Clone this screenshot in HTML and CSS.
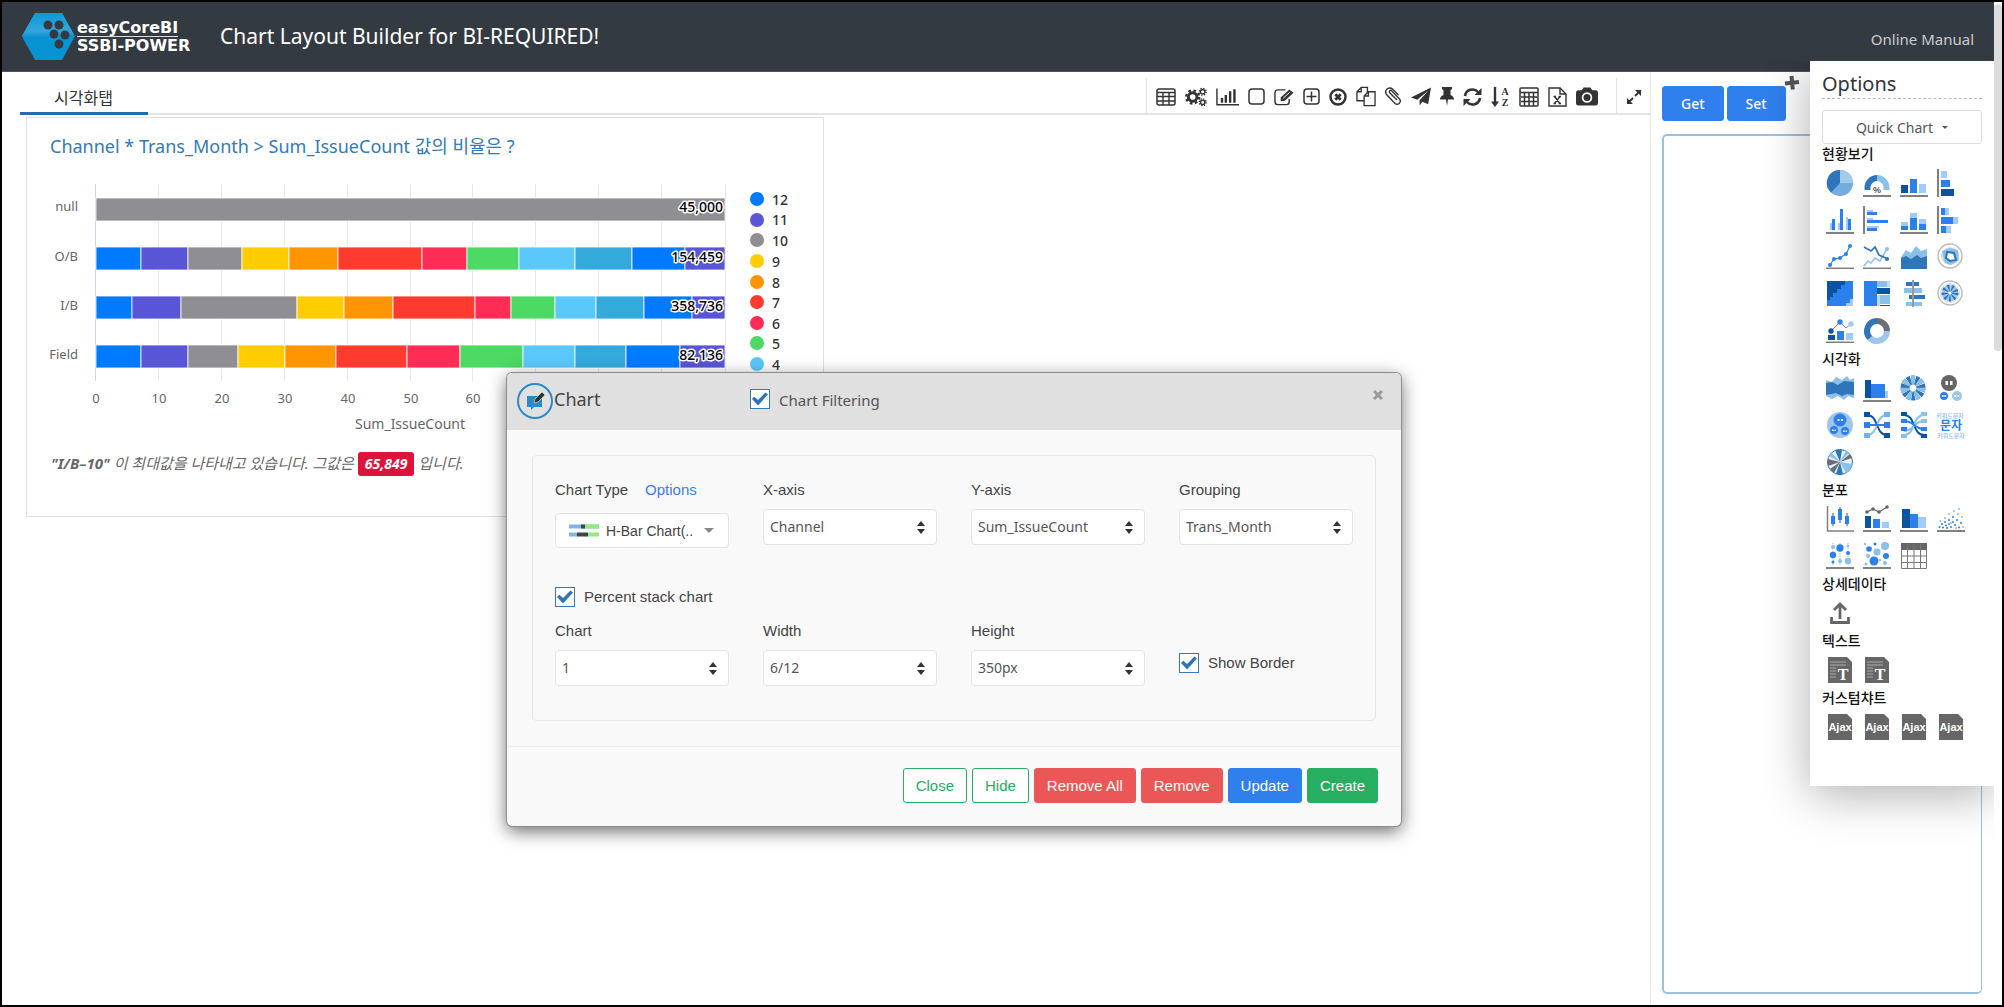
FILE: index.html
```html
<!DOCTYPE html>
<html lang="ko">
<head>
<meta charset="utf-8">
<title>Chart Layout Builder</title>
<link rel="stylesheet" href="styles.css">
</head>
<body>
<div class="page">
  <header class="topbar">
    <div class="brand">
      <svg class="brand-mark" viewBox="0 0 53 47" width="53" height="47" aria-hidden="true">
        <defs><linearGradient id="hex" x1="0" y1="0" x2="0" y2="1"><stop offset="0" stop-color="#0a9ad9"/><stop offset=".55" stop-color="#35a5dc"/><stop offset=".75" stop-color="#0790cf"/><stop offset="1" stop-color="#0a93d2"/></linearGradient></defs>
        <path d="M13 0H40L53 23L40 47H13L0 23Z" fill="#0894d3"/>
        <path d="M0 23L13 0H40L52 22Q24 20 5 33Z" fill="url(#hex)"/>
        <g fill="#343a42"><circle cx="26" cy="12" r="4.500"/><circle cx="37" cy="12" r="4.500"/><circle cx="32" cy="21" r="4.500"/><circle cx="43" cy="22" r="4.500"/><circle cx="37" cy="31" r="4.500"/></g>
      </svg>
      <div class="brand-name"><span class="brand-top">easyCoreBI</span><span class="brand-bottom">SSBI-POWER</span></div>
    </div>
    <h1>Chart Layout Builder for BI-REQUIRED!</h1>
    <a class="manual" href="#">Online Manual</a>
  </header>

  <div class="columns">
    <main class="work">
      <div class="tabs">
        <a class="tab" href="#">시각화탭</a>
        <div class="tools">
          <button class="tool" aria-label="Table"><svg viewBox="0 0 20 18" width="20" height="18"><rect x="1" y="1" width="18" height="16" rx="2" fill="none" stroke="currentColor" stroke-width="1.500"/><path d="M1 4.500H19M1 8.500H19M1 13H19M7 4V17M13 4V17" stroke="currentColor" stroke-width="1.400"/></svg></button>
          <button class="tool" aria-label="Settings"><svg viewBox="0 0 23 20" width="22" height="20" fill="none" stroke="currentColor"><circle cx="8" cy="10" r="4.500" stroke-width="3"/><circle cx="8" cy="10" r="6.800" stroke-width="2.400" stroke-dasharray="2.700 2.640"/><circle cx="18.500" cy="4.500" r="2.300" stroke-width="1.400"/><circle cx="18.500" cy="4.500" r="3.600" stroke-width="1.400" stroke-dasharray="1.400 1.430"/><circle cx="18.500" cy="15.500" r="2.300" stroke-width="1.400"/><circle cx="18.500" cy="15.500" r="3.600" stroke-width="1.400" stroke-dasharray="1.400 1.430"/></svg></button>
          <button class="tool" aria-label="Bar chart"><svg viewBox="0 0 24 18" width="23" height="18"><path d="M1 0V17H24" fill="none" stroke="currentColor" stroke-width="1.500"/><path d="M5 10h2.500v5H5zM9 7h2.500v8H9zM13.500 3H16v12h-2.500zM18 1h2.500v14H18z" fill="currentColor"/></svg></button>
          <button class="tool" aria-label="Box"><svg viewBox="0 0 17 17" width="17" height="17"><rect x="1" y="1" width="15" height="15" rx="3" fill="none" stroke="currentColor" stroke-width="1.500"/></svg></button>
          <button class="tool" aria-label="Edit"><svg viewBox="0 0 21 18" width="20" height="18"><path d="M12 1.500H4a3 3 0 0 0-3 3V14a3 3 0 0 0 3 3h9a3 3 0 0 0 3-3v-3" fill="none" stroke="currentColor" stroke-width="1.500"/><path d="M7 9.500L16 1l4.500 3.500L11.500 13L7 13.500Z" fill="currentColor"/><path d="M9.500 10.500L16.500 4" stroke="#fff"/></svg></button>
          <button class="tool" aria-label="Add"><svg viewBox="0 0 17 17" width="17" height="17" fill="none" stroke="currentColor" stroke-width="1.500"><rect x="1" y="1" width="15" height="15" rx="3"/><path d="M3.500 8.500H13.500M8.500 3.500V13.500"/></svg></button>
          <button class="tool" aria-label="Remove item"><svg viewBox="0 0 18 18" width="18" height="18" fill="none" stroke="currentColor"><circle cx="9" cy="9" r="7.500" stroke-width="2.500"/><path d="M6.300 6.300L11.700 11.700M11.700 6.300L6.300 11.700" stroke-width="2.800"/></svg></button>
          <button class="tool" aria-label="Copy"><svg viewBox="0 0 21 21" width="20" height="21" fill="#fff" stroke="currentColor" stroke-width="1.400"><path d="M5.500 1H12V15H1V5.500Z"/><path d="M5.500 1V5.500H1" fill="none"/><path d="M13 5.500H20V20H8.500V10Z"/><path d="M13 5.500V10H8.500" fill="none"/></svg></button>
          <button class="tool" aria-label="Attach"><svg viewBox="0 0 17 19" width="17" height="19" fill="none" stroke="currentColor" stroke-width="1.400"><path d="M12 13L4.500 5.500a1.500 1.500 0 0 1 2-2l8 8.500a3.200 3.200 0 0 1-4.500 4.500L2 8A4 4 0 0 1 7.500 2l6 6"/></svg></button>
          <button class="tool" aria-label="Send"><svg viewBox="0 0 21 20" width="20" height="20"><path d="M21 0L18 17.500L12 15L9 19V13.500L18 3.500L6.500 13L0 10.500Z" fill="currentColor"/></svg></button>
          <button class="tool" aria-label="Pin"><svg viewBox="0 0 14 19" width="14" height="19"><path d="M2 0H12V2L10.500 3V8Q14 9.500 14 12.500H8L7 19L6 12.500H0Q0 9.500 3.500 8V3L2 2Z" fill="currentColor"/></svg></button>
          <button class="tool" aria-label="Refresh"><svg viewBox="0 0 19 18" width="19" height="18"><path d="M2 8A7.500 7.500 0 0 1 15 4M17 10A7.500 7.500 0 0 1 4 14" fill="none" stroke="currentColor" stroke-width="2.600"/><path d="M18.500 0V7H11.500ZM.500 18V11H7.500Z" fill="currentColor"/></svg></button>
          <button class="tool" aria-label="Sort"><svg viewBox="0 0 19 22" width="19" height="22"><path d="M4 1V18" stroke="currentColor" stroke-width="2.400"/><path d="M0 15.500H8L4 21Z" fill="currentColor"/><text x="14" y="9" class="sort-letter">A</text><text x="14" y="20" class="sort-letter">Z</text></svg></button>
          <button class="tool" aria-label="Calculator"><svg viewBox="0 0 20 20" width="20" height="20" fill="none" stroke="currentColor" stroke-width="1.500"><rect x="1" y="1" width="18" height="18" rx="1"/><path d="M1 5.500H19M2 10H18M2 14.500H18M5.500 6V19M10 6V19M14.500 6V19"/></svg></button>
          <button class="tool" aria-label="Excel"><svg viewBox="0 0 19 20" width="19" height="20" fill="none" stroke="currentColor" stroke-width="1.400"><path d="M1 1H12L18 7V19H1Z"/><path d="M12 1V7H18"/><path d="M6.500 9.500L12 16.500M12 9.500L6.500 16.500M5.500 9.500H8M10.500 9.500H13M5.500 16.500H8M10.500 16.500H13"/></svg></button>
          <button class="tool" aria-label="Capture"><svg viewBox="0 0 23 19" width="22" height="19"><path d="M2.500 3H6L8 0H15L17 3H20.500A2.500 2.500 0 0 1 23 5.500V16.500A2.500 2.500 0 0 1 20.500 19H2.500A2.500 2.500 0 0 1 0 16.500V5.500A2.500 2.500 0 0 1 2.500 3Z" fill="currentColor"/><circle cx="11.500" cy="10.500" r="4.600" fill="none" stroke="#fff" stroke-width="1.800"/></svg></button>
        </div>
        <button class="expand" aria-label="Expand"><svg viewBox="0 0 14 14" width="14" height="14"><path d="M8 6L12 2M6 8L2 12" stroke="currentColor" stroke-width="1.800"/><path d="M8 0H14V6ZM0 8V14H6Z" fill="currentColor"/></svg></button>
      </div>

      <section class="card">
        <h2>Channel * Trans_Month &gt; Sum_IssueCount 값의 비율은 ?</h2>
        <svg class="chart" viewBox="0 0 796 265" width="796" height="265" role="img" aria-label="Sum_IssueCount by channel">
          <g class="grid"><path d="M131.500 16V213M194.500 16V213M257.500 16V213M320.500 16V213M383.500 16V213M445.500 16V213M508.500 16V213M571.500 16V213M634.500 16V213M698.500 16V213"/></g>
          <path class="axis" d="M68.500 16V213"/>
          <g class="bars">
            <rect x="69" y="30" width="629" height="23" fill="#8e8e93"/>
            <g transform="translate(69 79)">
              <rect width="45" height="23" fill="#007aff"/><rect x="45" width="47" height="23" fill="#5856d6"/><rect x="92" width="54" height="23" fill="#8e8e93"/><rect x="146" width="47" height="23" fill="#ffcc00"/><rect x="193" width="49" height="23" fill="#ff9500"/><rect x="242" width="84" height="23" fill="#ff3b30"/><rect x="326" width="45" height="23" fill="#ff2d55"/><rect x="371" width="52" height="23" fill="#4cd964"/><rect x="423" width="56" height="23" fill="#5ac8fa"/><rect x="479" width="57" height="23" fill="#34aadc"/><rect x="536" width="53" height="23" fill="#007aff"/><rect x="589" width="40" height="23" fill="#5856d6"/>
            </g>
            <g transform="translate(69 128)">
              <rect width="36" height="23" fill="#007aff"/><rect x="36" width="49" height="23" fill="#5856d6"/><rect x="85" width="116" height="23" fill="#8e8e93"/><rect x="201" width="47" height="23" fill="#ffcc00"/><rect x="248" width="49" height="23" fill="#ff9500"/><rect x="297" width="82" height="23" fill="#ff3b30"/><rect x="379" width="36" height="23" fill="#ff2d55"/><rect x="415" width="44" height="23" fill="#4cd964"/><rect x="459" width="41" height="23" fill="#5ac8fa"/><rect x="500" width="48" height="23" fill="#34aadc"/><rect x="548" width="48" height="23" fill="#007aff"/><rect x="596" width="33" height="23" fill="#5856d6"/>
            </g>
            <g transform="translate(69 177)">
              <rect width="45" height="23" fill="#007aff"/><rect x="45" width="47" height="23" fill="#5856d6"/><rect x="92" width="50" height="23" fill="#8e8e93"/><rect x="142" width="47" height="23" fill="#ffcc00"/><rect x="189" width="51" height="23" fill="#ff9500"/><rect x="240" width="71" height="23" fill="#ff3b30"/><rect x="311" width="53" height="23" fill="#ff2d55"/><rect x="364" width="63" height="23" fill="#4cd964"/><rect x="427" width="52" height="23" fill="#5ac8fa"/><rect x="479" width="51" height="23" fill="#34aadc"/><rect x="530" width="54" height="23" fill="#007aff"/><rect x="584" width="45" height="23" fill="#5856d6"/>
            </g>
          </g>
          <g class="category"><text x="51" y="43">null</text><text x="51" y="93">O/B</text><text x="51" y="142">I/B</text><text x="51" y="191">Field</text></g>
          <g class="total"><text x="696" y="44">45,000</text><text x="696" y="94">154,459</text><text x="696" y="143">358,736</text><text x="696" y="192">82,136</text></g>
          <g class="tick"><text x="69" y="235">0</text><text x="132" y="235">10</text><text x="195" y="235">20</text><text x="258" y="235">30</text><text x="321" y="235">40</text><text x="384" y="235">50</text><text x="446" y="235">60</text><text x="383" y="261" class="axis-title">Sum_IssueCount</text></g>
          <g>
            <circle cx="730" cy="31" r="7" fill="#007aff"/><circle cx="730" cy="52" r="7" fill="#5856d6"/><circle cx="730" cy="72" r="7" fill="#8e8e93"/><circle cx="730" cy="93" r="7" fill="#ffcc00"/><circle cx="730" cy="114" r="7" fill="#ff9500"/><circle cx="730" cy="134" r="7" fill="#ff3b30"/><circle cx="730" cy="155" r="7" fill="#ff2d55"/><circle cx="730" cy="175" r="7" fill="#4cd964"/><circle cx="730" cy="196" r="7" fill="#5ac8fa"/>
          </g>
          <g class="legend"><text x="745" y="37">12</text><text x="745" y="57">11</text><text x="745" y="78">10</text><text x="745" y="99">9</text><text x="745" y="120">8</text><text x="745" y="140">7</text><text x="745" y="161">6</text><text x="745" y="181">5</text><text x="745" y="202">4</text></g>
        </svg>
        <p class="summary"><b>"I/B–10"</b> 이 최대값을 나타내고 있습니다. 그값은 <b class="badge">65,849</b> 입니다.</p>
      </section>
    </main>

    <aside class="side">
      <div class="side-buttons"><button class="btn blue">Get</button><button class="btn blue">Set</button></div>
      <textarea class="editor" aria-label="Layout source"></textarea>
    </aside>
  </div>

  <div class="scrollbar"></div>
</div>

<section class="options">
  <button class="plus" aria-label="Toggle options"><svg viewBox="0 0 16 16" width="16" height="16"><path d="M7.500 1L8.800 14.500M1 8.500L15 7" stroke="#4d5157" stroke-width="4"/></svg></button>
  <h2>Options</h2>
  <button class="quick">Quick Chart <span class="caret"></span></button>

  <h3>현황보기</h3>
  <div class="icons">
    <svg viewBox="0 0 28 28"><circle cx="14" cy="14" r="13" fill="#74acdf"/><path d="M14 14V1A13 13 0 0 0 5 23.500Z" fill="#2f75b9"/><path d="M14 14V1A13 13 0 0 1 27 14Z" fill="#a1caec"/></svg>
    <svg viewBox="0 0 28 28"><path d="M4.500 21V18.500A9.500 9.500 0 0 1 14 9" fill="none" stroke="#2f75b9" stroke-width="6"/><path d="M14 9A9.500 9.500 0 0 1 23.500 18.500V21" fill="none" stroke="#8bc0e8" stroke-width="6"/><text x="14" y="24" class="percent">%</text><path d="M0 26H28V28H0Z" fill="#808080"/></svg>
    <svg viewBox="0 0 28 28"><path d="M1 16H8V24H1Z" fill="#0a53a0"/><path d="M10 10H17V24H10Z" fill="#2b80ec"/><path d="M19 15H26V24H19Z" fill="#9fcbff"/><path d="M0 26H28V28H0Z" fill="#808080"/></svg>
    <svg viewBox="0 0 28 28"><path d="M0 0H2V28H0Z" fill="#808080"/><path d="M4 2H10V9H4Z" fill="#9fcbff"/><path d="M4 11H13V18H4Z" fill="#2b80ec"/><path d="M4 20H17V27H4Z" fill="#0a53a0"/></svg>
    <svg viewBox="0 0 28 28"><path d="M4 17H6V24H4ZM12 17H14V24H12ZM20 11H22V24H20Z" fill="#9fcbff"/><path d="M6 13H9V24H6ZM14 3H17V24H14ZM22 13H25V24H22Z" fill="#2b80ec"/><path d="M0 26H28V28H0Z" fill="#808080"/></svg>
    <svg viewBox="0 0 28 28"><path d="M0 0H2V28H0Z" fill="#808080"/><path d="M4 4H10V6H4ZM4 12H10V14H4ZM4 20H16V22H4Z" fill="#9fcbff"/><path d="M4 6H14V9H4ZM4 14H25V17H4ZM4 22H14V25H4Z" fill="#2b80ec"/></svg>
    <svg viewBox="0 0 28 28"><path d="M1 16H8V20H1ZM10 7H17V12H10ZM19 13H26V18H19Z" fill="#9fcbff"/><path d="M1 20H8V24H1ZM10 12H17V24H10ZM19 18H26V24H19Z" fill="#2b80ec"/><path d="M0 26H28V28H0Z" fill="#808080"/></svg>
    <svg viewBox="0 0 28 28"><path d="M0 0H2V28H0Z" fill="#808080"/><path d="M4 2H8V9H4ZM4 11H16V18H4ZM4 20H9V27H4Z" fill="#2b80ec"/><path d="M8 2H12V9H8ZM16 11H21V18H16ZM9 20H14V27H9Z" fill="#9fcbff"/></svg>

    <svg viewBox="0 0 28 28"><path d="M4 22L8 16L14 15L20 11L24 3" fill="none" stroke="#2b80ec" stroke-width="1.200"/><g fill="#2b80ec"><circle cx="4" cy="22" r="2"/><circle cx="8" cy="16" r="2"/><circle cx="14" cy="15" r="2"/><circle cx="20" cy="11" r="2"/><circle cx="24" cy="3" r="2"/></g><path d="M0 24.500H28V26H0Z" fill="#808080"/></svg>
    <svg viewBox="0 0 28 28"><path d="M1 23L5 18L8 20L12 15L17 18L24 6" fill="none" stroke="#8bc0e8" stroke-width="1.500"/><path d="M1 4L8 8L12 4L16 12L25 16" fill="none" stroke="#2f75b9" stroke-width="1.700"/><circle cx="24" cy="6" r="2" fill="#8bc0e8"/><circle cx="24" cy="16" r="2" fill="#2f75b9"/><path d="M0 24.500H28V26H0Z" fill="#808080"/></svg>
    <svg viewBox="0 0 28 28"><path d="M1 14L6 7L11 10L16 3L21 8L27 6V26H1Z" fill="#8bc0e8"/><path d="M1 15L6 13L11 16L17 12L21 15L27 13V26H1Z" fill="#2f75b9"/></svg>
    <svg viewBox="0 0 28 28"><circle cx="13" cy="13" r="12" fill="none" stroke="#bbb" stroke-width="1.400"/><circle cx="13" cy="13" r="9" fill="#ddd"/><path d="M5 8L13 5L21 7L22 17L14 22L8 20Z" fill="#8bc0e8"/><path d="M10 9L17 10L19 17L13 18L9 15Z" fill="#fff" stroke="#2f75b9" stroke-width="2"/></svg>

    <svg viewBox="0 0 28 28"><path d="M1 1H27V26H1Z" fill="#2b80ec"/><path d="M1 1H19V5H15V9H11V13H7V17H4V20H1Z" fill="#0a53a0"/><path d="M27 19V26H20V23H24V19Z" fill="#9fcbff"/></svg>
    <svg viewBox="0 0 28 28"><path d="M1 1H14V26H1Z" fill="#2b80ec"/><path d="M14 1H24V7H14Z" fill="#8bc0e8"/><path d="M24 1H27V7H24Z" fill="#b9dcff"/><path d="M14 8H27V14H14Z" fill="#0a53a0"/><path d="M17 15H27V24H17Z" fill="#8bc0e8"/><path d="M14 15H17V26H14Z" fill="#b9dcff"/><path d="M17 25H27V26H17Z" fill="#0a53a0"/></svg>
    <svg viewBox="0 0 28 28"><path d="M6 2H19V6H6ZM9 15H25V19H9Z" fill="#2f75b9"/><path d="M4 8H22V13H4ZM6 22H22V26H6Z" fill="#8bc0e8"/><path d="M12 0H14V27H12Z" fill="#999"/></svg>
    <svg viewBox="0 0 28 28"><circle cx="13" cy="13" r="12" fill="none" stroke="#bbb" stroke-width="1.400"/><circle cx="13" cy="13" r="9.500" fill="none" stroke="#ddd"/><circle cx="13" cy="13" r="5" fill="none" stroke="#9dc6ea" stroke-width="7"/><circle cx="13" cy="13" r="5" fill="none" stroke="#2f75b9" stroke-width="7" stroke-dasharray="1.500 2"/></svg>

    <svg viewBox="0 0 28 28"><path d="M5 14L14 5L20 11L25 7" fill="none" stroke="#888"/><circle cx="5" cy="14" r="2.700" fill="#0a53a0"/><circle cx="14" cy="5" r="2.700" fill="#2b80ec"/><circle cx="25" cy="7" r="2.700" fill="#9fcbff"/><path d="M2 18H9V23H2Z" fill="#0a53a0"/><path d="M11 14H18V23H11Z" fill="#2b80ec"/><path d="M20 16H27V23H20Z" fill="#9fcbff"/><path d="M0 24.500H28V26H0Z" fill="#808080"/></svg>
    <svg viewBox="0 0 28 28"><g fill="none" stroke-width="6"><path d="M14 4A10 10 0 0 1 24 14" stroke="#6b6f73"/><path d="M24 14A10 10 0 0 1 7 21" stroke="#9dc6ea"/><path d="M7 21A10 10 0 0 1 14 4" stroke="#2f75b9"/></g></svg>
  </div>

  <h3>시각화</h3>
  <div class="icons">
    <svg viewBox="0 0 28 28"><path d="M0 6L6 8L10 3L16 6L21 2L24 6L28 4V24L22 22L18 26L12 22L6 25L0 22Z" fill="#8bc0e8"/><path d="M0 9L6 8L12 11L18 7L28 8V21L21 20L16 22L10 19L0 21Z" fill="#2f75b9"/></svg>
    <svg viewBox="0 0 28 28"><path d="M2 6H8V24H2Z" fill="#0a53a0"/><path d="M8 10H22V24H8Z" fill="#2b80ec"/><path d="M22 17H25V24H22Z" fill="#9fcbff"/><path d="M0 26H28V28H0Z" fill="#808080"/></svg>
    <svg viewBox="0 0 28 28"><circle cx="13" cy="14" r="8" fill="none" stroke="#2f75b9" stroke-width="9" stroke-dasharray="3 .600"/><circle cx="13" cy="14" r="8" fill="none" stroke="#8bc0e8" stroke-width="9" stroke-dasharray="3 4.200"/></svg>
    <svg viewBox="0 0 28 28"><circle cx="12" cy="9" r="8" fill="#666"/><circle cx="7" cy="22" r="4" fill="#2b80ec"/><circle cx="20" cy="22" r="5" fill="#9dc6ea"/><path d="M8.500 7H11V11H8.500ZM13 7H15.500V11H13ZM5 21H6.500V23H5ZM7.500 21H9V23H7.500ZM17.500 21H19V23H17.500ZM20.500 21H22V23H20.500Z" fill="#fff"/></svg>
    <svg viewBox="0 0 28 28"><circle cx="14" cy="14" r="13" fill="#9dc6ea"/><g fill="#2b80ec"><circle cx="14" cy="9" r="6.500"/><circle cx="8" cy="19" r="4"/><circle cx="19" cy="20" r="4"/></g><path d="M11.500 8H13.500V10H11.500ZM15 8H17V10H15ZM6 18.500H7.500V20H6ZM8.500 18.500H10V20H8.500ZM17 19.500H18.500V21H17ZM19.500 19.500H21V21H19.500Z" fill="#fff"/></svg>
    <svg viewBox="0 0 28 28"><path d="M4 4C16 4 12 24 24 24" fill="none" stroke="#0a53a0" stroke-width="2"/><path d="M4 24C16 24 12 4 24 4" fill="none" stroke="#8bc0e8" stroke-width="2"/><path d="M4 14H24" stroke="#2b80ec" stroke-width="2"/><path d="M1 1H7V6H1ZM21 22H27V27H21Z" fill="#0a53a0"/><path d="M1 11H7V17H1ZM21 11H27V17H21Z" fill="#2b80ec"/><path d="M1 22H7V27H1ZM21 1H27V6H21Z" fill="#71b2f5"/></svg>
    <svg viewBox="0 0 28 28"><path d="M4 4C16 4 12 24 24 24" fill="none" stroke="#0a53a0" stroke-width="2"/><path d="M4 24C16 24 12 4 24 4M4 20C14 20 14 10 24 10" fill="none" stroke="#8bc0e8" stroke-width="2"/><path d="M4 10C14 10 14 18 24 18" fill="none" stroke="#2b80ec" stroke-width="2"/><path d="M1 1H7V5H1ZM21 23H27V27H21Z" fill="#0a53a0"/><path d="M1 8H7V12H1ZM21 16H27V20H21ZM1 16H7V20H1Z" fill="#2b80ec"/><path d="M1 23H7V27H1ZM21 1H27V5H21ZM21 8H27V12H21Z" fill="#8bc0e8"/></svg>
    <svg viewBox="0 0 28 28"><text x="13" y="7" class="word-small">키워드문자</text><text x="14" y="19" class="word-big">문자</text><text x="14" y="27" class="word-small">키워드문자</text></svg>

    <svg viewBox="0 0 28 28"><circle cx="14" cy="14" r="12.500" fill="#e4f0fa" stroke="#2f75b9"/><path d="M14 14L9 2A12 12 0 0 1 16 2ZM14 14L10 26A12 12 0 0 0 17 26Z" fill="#2f75b9"/><path d="M14 14L2 11A12 12 0 0 0 2 18ZM14 14L24 6A12 12 0 0 1 26 10ZM14 14L4 21A12 12 0 0 0 8 25Z" fill="#6b6f73"/><path d="M14 14L20 3A12 12 0 0 1 23 5ZM14 14L26 16A12 12 0 0 1 20 25ZM14 14L3 8A12 12 0 0 1 6 5Z" fill="#8bc0e8"/></svg>
  </div>

  <h3>분포</h3>
  <div class="icons">
    <svg viewBox="0 0 28 28"><path d="M1.500 1V26H28" fill="none" stroke="#808080" stroke-width="1.500"/><path d="M7 8V21M14 2V18M21 8V21" stroke="#555"/><path d="M5 11H9V19H5ZM12 4H16V15H12ZM19 11H23V19H19Z" fill="#2b80ec"/></svg>
    <svg viewBox="0 0 28 28"><path d="M4 7L10 4L16 7L24 2" fill="none" stroke="#666" stroke-width="1.200"/><g fill="#666"><circle cx="4" cy="7" r="1.800"/><circle cx="10" cy="4" r="1.800"/><circle cx="16" cy="7" r="1.800"/><circle cx="24" cy="2" r="1.800"/></g><path d="M2 11H8V23H2Z" fill="#0a53a0"/><path d="M10 14H17V23H10Z" fill="#2b80ec"/><path d="M19 17H26V23H19Z" fill="#9fcbff"/><path d="M0 25H28V27H0Z" fill="#808080"/></svg>
    <svg viewBox="0 0 28 28"><path d="M2 4H10V23H2Z" fill="#0a53a0"/><path d="M10 9H18V23H10Z" fill="#2b80ec"/><path d="M18 12H26V23H18Z" fill="#9fcbff"/><path d="M0 25H28V27H0Z" fill="#808080"/></svg>
    <svg viewBox="0 0 28 28"><g fill="#2b80ec"><circle cx="2.500" cy="22" r="1"/><circle cx="5" cy="19" r="1"/><circle cx="6" cy="22.500" r="1"/><circle cx="8" cy="17" r="1"/><circle cx="9" cy="20.500" r="1"/><circle cx="10" cy="23" r="1"/><circle cx="12" cy="15" r="1"/><circle cx="12" cy="19" r="1"/><circle cx="14" cy="22" r="1"/><circle cx="16" cy="12" r="1"/><circle cx="16" cy="17" r="1"/><circle cx="18" cy="20" r="1"/><circle cx="20" cy="15" r="1"/><circle cx="22" cy="22.500" r="1"/><circle cx="24" cy="18" r="1"/></g><g fill="#8bc0e8"><circle cx="3.500" cy="16" r="1"/><circle cx="8" cy="13" r="1"/><circle cx="12" cy="9" r="1"/><circle cx="17" cy="6" r="1"/><circle cx="22" cy="4" r="1"/><circle cx="21" cy="9" r="1"/><circle cx="25" cy="12" r="1"/><circle cx="19" cy="23" r="1"/><circle cx="26" cy="22" r="1"/><circle cx="14" cy="18" r="1"/></g><path d="M0 25H28V27H0Z" fill="#808080"/></svg>
    <svg viewBox="0 0 28 28"><path d="M7 1V24M14 1V24M22 1V24" stroke="#bbb" stroke-dasharray="1.500 1"/><g fill="#2b80ec"><circle cx="7" cy="13" r="3.200"/><circle cx="14" cy="6" r="3.700"/><circle cx="22" cy="11" r="2"/><circle cx="7" cy="20" r="1.500"/></g><g fill="#8bc0e8"><circle cx="7" cy="5" r="2"/><circle cx="14" cy="19" r="2"/><circle cx="22" cy="19" r="3.200"/><circle cx="22" cy="4" r="1.500"/></g><path d="M0 25H28V27H0Z" fill="#808080"/></svg>
    <svg viewBox="0 0 28 28"><g fill="#2b80ec"><circle cx="6" cy="7" r="2.800"/><circle cx="12" cy="2" r="1.500"/><circle cx="23" cy="14" r="3"/><circle cx="11" cy="19" r="4.500"/></g><g fill="#8bc0e8"><circle cx="22" cy="4" r="4"/><circle cx="14" cy="10" r="3.500"/><circle cx="5" cy="14" r="2"/><circle cx="22" cy="21" r="2"/><circle cx="2" cy="2" r="1.200"/><circle cx="3" cy="22" r="1.500"/><circle cx="17" cy="18" r="1.200"/></g><path d="M0 25H28V27H0Z" fill="#808080"/></svg>
    <svg viewBox="0 0 28 28"><path d="M1 1H27V27H1Z" fill="#fff"/><path d="M1 1H27V8H1Z" fill="#666"/><path d="M1.500 7V26.500H26.500V7M1 14H27M1 20.500H27M7.500 2V27M14 2V27M20.500 2V27" fill="none" stroke="#777"/></svg>
  </div>

  <h3>상세데이타</h3>
  <div class="icons">
    <svg viewBox="0 0 28 28"><path d="M5.500 18V23.500H22.500V18M14 20V6M8 11L14 5L20 11" fill="none" stroke="#666" stroke-width="2.800"/></svg>
  </div>

  <h3>텍스트</h3>
  <div class="icons">
    <svg viewBox="0 0 28 28"><path d="M2 1H21L26 6V27H2Z" fill="#666"/><path d="M4 6H20M4 9H20M4 12H10M4 15H10M4 18H10M4 21H10" stroke="#aaa"/><text x="17" y="24" class="letter-t">T</text></svg>
    <svg viewBox="0 0 28 28"><path d="M2 1H21L26 6V27H2Z" fill="#666"/><path d="M4 6H20M4 9H20M4 12H10M4 15H10M4 18H10M4 21H10" stroke="#aaa"/><text x="17" y="24" class="letter-t">T</text></svg>
  </div>

  <h3>커스텀챠트</h3>
  <div class="icons">
    <svg viewBox="0 0 28 28"><path d="M2 1H21L26 6V27H2Z" fill="#666"/><text x="14" y="18" class="ajax">Ajax</text></svg>
    <svg viewBox="0 0 28 28"><path d="M2 1H21L26 6V27H2Z" fill="#666"/><text x="14" y="18" class="ajax">Ajax</text></svg>
    <svg viewBox="0 0 28 28"><path d="M2 1H21L26 6V27H2Z" fill="#666"/><text x="14" y="18" class="ajax">Ajax</text></svg>
    <svg viewBox="0 0 28 28"><path d="M2 1H21L26 6V27H2Z" fill="#666"/><text x="14" y="18" class="ajax">Ajax</text></svg>
  </div>
</section>

<form class="dialog" role="dialog" aria-labelledby="dialog-title">
  <div class="dialog-head">
    <div class="dialog-title">
      <svg viewBox="0 0 36 36" width="36" height="36" aria-hidden="true"><circle cx="18" cy="18" r="17" fill="#e0e0e0" stroke="#2a8bca" stroke-width="2"/><path d="M10 13H25V24H17L14 27V24H10Z" fill="#2a8bca"/><path d="M17 20L18 16L25 9L28 12L21 19Z" fill="#333" stroke="#e8e8e8" stroke-width=".600"/></svg>
      <h2 id="dialog-title">Chart</h2>
    </div>
    <label class="check open"><input type="checkbox" checked>Chart Filtering</label>
    <button type="button" class="close" aria-label="Close dialog"><svg viewBox="0 0 10 10" width="10" height="10"><path d="M1 1L9 9M9 1L1 9" stroke="#9a9a9a" stroke-width="3"/></svg></button>
  </div>
  <div class="dialog-body">
    <div class="panel">
      <div class="fields">
        <div class="field">
          <div class="label-row"><label for="type">Chart Type</label><a href="#">Options</a></div>
          <button type="button" id="type" class="type"><svg viewBox="0 0 30 13" width="30" height="13"><path d="M0 2.500H30" stroke="#7cb5ec" stroke-width="4"/><path d="M16 2.500H30M19 10.500H30" stroke="#90ed7d" stroke-width="4"/><path d="M0 10.500H8" stroke="#7cb5ec" stroke-width="4"/><path d="M12 2.500H16M8 10.500H19" stroke="#434348" stroke-width="4"/></svg><span>H-Bar Chart(..</span><span class="caret wide"></span></button>
        </div>
        <div class="field"><label for="xaxis">X-axis</label><div class="select"><select id="xaxis"><option>Channel</option></select><svg viewBox="0 0 8 13" width="8" height="13"><path d="M0 5L4 0L8 5ZM0 8H8L4 13Z"/></svg></div></div>
        <div class="field"><label for="yaxis">Y-axis</label><div class="select"><select id="yaxis"><option>Sum_IssueCount</option></select><svg viewBox="0 0 8 13" width="8" height="13"><path d="M0 5L4 0L8 5ZM0 8H8L4 13Z"/></svg></div></div>
        <div class="field"><label for="group">Grouping</label><div class="select"><select id="group"><option>Trans_Month</option></select><svg viewBox="0 0 8 13" width="8" height="13"><path d="M0 5L4 0L8 5ZM0 8H8L4 13Z"/></svg></div></div>
      </div>
      <label class="check"><input type="checkbox" checked>Percent stack chart</label>
      <div class="fields second">
        <div class="field"><label for="chart">Chart</label><div class="select"><select id="chart"><option>1</option></select><svg viewBox="0 0 8 13" width="8" height="13"><path d="M0 5L4 0L8 5ZM0 8H8L4 13Z"/></svg></div></div>
        <div class="field"><label for="width">Width</label><div class="select"><select id="width"><option>6/12</option></select><svg viewBox="0 0 8 13" width="8" height="13"><path d="M0 5L4 0L8 5ZM0 8H8L4 13Z"/></svg></div></div>
        <div class="field"><label for="height">Height</label><div class="select"><select id="height"><option>350px</option></select><svg viewBox="0 0 8 13" width="8" height="13"><path d="M0 5L4 0L8 5ZM0 8H8L4 13Z"/></svg></div></div>
        <label class="check"><input type="checkbox" checked>Show Border</label>
      </div>
    </div>
  </div>
  <div class="dialog-foot">
    <button type="button" class="btn outline">Close</button>
    <button type="button" class="btn outline">Hide</button>
    <button type="button" class="btn red">Remove All</button>
    <button type="button" class="btn red">Remove</button>
    <button type="button" class="btn blue">Update</button>
    <button type="button" class="btn green">Create</button>
  </div>
</form>
</body>
</html>
```
FILE: styles.css
```css
* { box-sizing: border-box; }
body { margin: 0; color: #333; background: #fff; font-family: "Noto Sans", "Noto Sans CJK KR", sans-serif; font-size: 14px; }
button { font: inherit; color: inherit; background: none; border: 0; padding: 0; }
a { color: inherit; text-decoration: none; }
h1, h2, h3, p { margin: 0; font-weight: 400; }
svg { display: block; }

.page { position: relative; display: flex; flex-direction: column; min-height: 100vh; border: 2px solid #000; padding-right: 8px; }
.scrollbar { position: absolute; top: 2px; right: 0; width: 8px; height: 347px; border-radius: 4px; background: #dcdcdc; }

.topbar { display: flex; align-items: center; height: 70px; padding: 0 20px; background: #343a42; border-bottom: 1px solid #50555c; color: #fff; }
.brand { display: flex; align-items: center; gap: 2px; width: 198px; }
.brand-name { display: flex; flex-direction: column; font: 700 16px/17px "DejaVu Sans", sans-serif; }
.brand-top { align-self: flex-start; border-bottom: 1px solid #ddd; }
h1 { font-size: 21px; line-height: 30px; padding-bottom: 2px; }
.manual { margin-left: auto; font-size: 15px; color: #c9cbcd; padding-top: 4px; }

.columns { flex: 1; display: flex; }
.work { flex: 1; min-width: 0; padding-left: 18px; border-right: 1px solid #e8e8e8; }
.tabs { display: flex; align-items: stretch; height: 43px; border-bottom: 2px solid #e2e5e5; }
.tab { width: 128px; height: 43px; padding: 15px 0 0 34px; font-size: 16px; line-height: 22px; border-bottom: 3px solid #276dae; }
.tools { display: flex; align-items: center; gap: 9px; margin: 6px 0 0 auto; padding: 2px 18px 0 9px; border-left: 1px solid #e4e4e4; border-right: 1px solid #e4e4e4; }
.tool, .expand { flex: none; display: flex; align-items: center; color: #333; }
.expand { width: 33px; justify-content: center; padding-top: 8px; }
.sort-letter { font: 700 10px "Liberation Serif", serif; text-anchor: middle; fill: currentColor; }

.card { width: 798px; height: 400px; margin: 2px 0 0 6px; border: 1px solid #dfdfdf; }
.card h2 { padding: 15px 0 0 23px; font-size: 18px; line-height: 27px; color: #337ab7; }
.chart { margin-top: 8px; }
.grid path { stroke: #e8e8e8; stroke-width: 1; }
.axis { stroke: #ccd6eb; }
.bars rect { stroke: rgba(255, 255, 255, .8); stroke-width: 1; }
.category, .tick { fill: #666; font-size: 13px; }
.category { text-anchor: end; }
.tick { text-anchor: middle; }
.axis-title { font-size: 14px; }
.total { text-anchor: end; font-size: 14px; font-weight: 500; fill: #000; stroke: #fff; stroke-width: 3px; stroke-linejoin: round; paint-order: stroke; }
.legend { font-size: 14px; font-weight: 500; fill: #333; }
.summary { padding: 18px 0 0 24px; font-size: 15px; line-height: 24px; font-style: italic; color: #666; }
.badge { display: inline-block; padding: 0 7px; border-radius: 3px; background: #dc143c; color: #fff; font-size: 14px; }

.side { width: 343px; display: flex; flex-direction: column; padding: 14px 12px 11px 11px; }
.side-buttons { display: flex; gap: 3px; margin-bottom: 13px; }
.side-buttons .btn { font-family: inherit; font-size: 14px; font-weight: 500; padding: 0 18px; }
.editor { flex: 1; width: 100%; border: 2px solid #9bc1e2; border-right-width: 1px; border-radius: 5px; resize: none; }

.btn { height: 35px; padding: 0 12px; border: 1px solid; border-radius: 3px; font: 15px "Liberation Sans", sans-serif; color: #fff; }
.blue { background: #2f80ed; border-color: #2f80ed; }
.red { background: #eb5757; border-color: #eb5757; }
.green { background: #27ae60; border-color: #27ae60; }
.outline { background: #fff; border-color: #27ae60; color: #27ae60; }

.options { position: absolute; top: 61px; right: 10px; width: 184px; padding: 8px 12px 41px; background: #fff; box-shadow: 0 8px 45px rgba(0, 0, 0, .32); clip-path: inset(0 0 -60px -60px); }
.plus { position: absolute; left: -26px; top: 14px; }
.options h2 { font-size: 20px; line-height: 29px; border-bottom: 1px dashed #bbb; }
.quick { display: flex; align-items: center; justify-content: center; gap: 9px; width: 160px; height: 34px; margin-top: 11px; border: 1px solid #ddd; border-radius: 3px; color: #555; }
.caret { border: 3px solid transparent; border-top-color: currentColor; border-bottom: 0; }
.options h3 { font-size: 14px; line-height: 20px; font-weight: 500; color: #111; }
.icons { display: grid; grid-template-columns: repeat(4, 37px); grid-auto-rows: 37px; align-items: center; padding-left: 4px; }
.icons svg { width: 28px; height: 28px; }
.percent { font: 700 9px "Liberation Sans", sans-serif; text-anchor: middle; fill: #555; }
.word-small { font: 500 6px "Noto Sans CJK KR", sans-serif; text-anchor: middle; fill: #8bb9ea; }
.word-big { font: 700 12px "Noto Sans CJK KR", sans-serif; text-anchor: middle; fill: #2b80ec; }
.letter-t { font: 700 16px "Liberation Serif", serif; text-anchor: middle; fill: #fff; }
.ajax { font: 700 11px "Liberation Sans", sans-serif; text-anchor: middle; fill: #fff; }

.dialog { position: absolute; left: 507px; top: 373px; width: 894px; border-radius: 5px; background: #f9f9f9; box-shadow: 0 0 0 1px #8d8d8d, 0 5px 18px rgba(0, 0, 0, .6); }
.dialog-head { display: grid; grid-template-columns: 233px 1fr auto; align-items: start; height: 57px; padding: 10px 18px 0 10px; background: #e0e0e0; border-radius: 5px 5px 0 0; }
.dialog-title { display: flex; gap: 1px; }
.dialog-title h2 { font-size: 18px; line-height: 32px; color: #444; }
.dialog-head .check { padding-top: 6px; }
.close { padding: 7px 0; }
.dialog-body { padding: 25px; border-bottom: 1px solid #ededed; }
.panel { padding: 24px 22px 34px; border: 1px solid #e6e6e6; border-radius: 5px; font: 15px "Liberation Sans", sans-serif; color: #444; }
.fields { display: grid; grid-template-columns: repeat(4, 1fr); gap: 34px; }
.field { display: flex; flex-direction: column; gap: 9px; line-height: 20px; }
.label-row { display: flex; gap: 17px; }
.label-row a { color: #3b7cf0; }
.type { display: flex; align-items: center; height: 35px; margin-top: 4px; padding: 0 14px 0 13px; border: 1px solid #e4e4e4; border-radius: 4px; background: #fff; font-size: 14px; }
.type span:first-of-type { margin-left: 7px; }
.caret.wide { border-width: 5px; border-bottom: 0; margin-left: auto; color: #888; }
.select { display: grid; align-items: center; }
.select > * { grid-area: 1 / 1; }
.select svg { justify-self: end; margin-right: 12px; fill: #333; pointer-events: none; }
.select select { width: 100%; height: 36px; padding: 0 6px 2px; appearance: none; border: 1px solid #e4e4e4; border-radius: 4px; background: #fff; color: #555; font: 14px "Noto Sans", sans-serif; }
.panel > .check { margin: 39px 0 14px; }
.check { display: flex; align-items: flex-start; gap: 9px; line-height: 20px; }
.check.open { font-size: 15px; line-height: 22px; color: #555; }
.second .check { margin-top: 32px; }
.check input { flex: none; display: grid; place-items: center; appearance: none; width: 20px; height: 20px; margin: 0; border: 1px solid #337ab7; background: #fff; }
.check input:checked::after { content: ""; width: 16px; height: 14px; background: #2f74b5; clip-path: polygon(0 50%, 14% 34%, 38% 58%, 84% 4%, 100% 18%, 38% 96%); }
.dialog-foot { display: flex; justify-content: flex-end; gap: 5px; padding: 21px 23px 23px; }
```
